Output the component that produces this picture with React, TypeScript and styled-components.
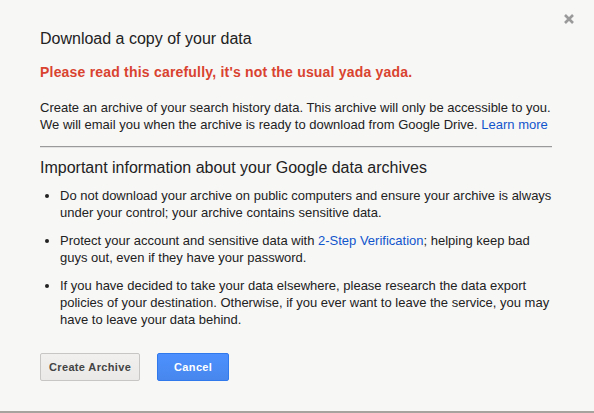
import styled, { createGlobalStyle } from "styled-components";

const GlobalStyle = createGlobalStyle`
  html, body {
    margin: 0;
    padding: 0;
    background: #f7f7f6;
  }
  body {
    font-family: "Liberation Sans", Arial, sans-serif;
    color: #222;
  }
`;

const Dialog = styled.div`
  position: relative;
  width: 594px;
  height: 413px;
  box-sizing: border-box;
  padding: 29px 42px 0 40px;
  background: #f7f7f6;
  border-bottom: 2px solid #a6a29e;
`;

const Close = styled.button`
  position: absolute;
  top: 13px;
  right: 19px;
  width: 12px;
  height: 12px;
  padding: 0;
  border: 0;
  background: none;
  cursor: pointer;
  display: flex;
`;

const Title = styled.h2`
  margin: 0;
  font-size: 16px;
  line-height: 20px;
  font-weight: normal;
  color: #222;
`;

const Warning = styled.p`
  margin: 15px 0 0;
  font-size: 14px;
  line-height: 17px;
  font-weight: bold;
  letter-spacing: 0.2px;
  color: #d9432f;
`;

const Text = styled.p`
  margin: 18px 0 0;
  font-size: 13px;
  line-height: 17px;
`;

const Link = styled.a`
  color: #15c;
  text-decoration: none;
`;

const Divider = styled.hr`
  margin: 13px 0 10px;
  border: 0;
  border-top: 1px solid #9a9a9a;
  border-bottom: 1px solid #e2e2e2;
  height: 0;
`;

const Heading = styled.h3`
  margin: 0;
  font-size: 16px;
  line-height: 20px;
  font-weight: normal;
  color: #222;
`;

const List = styled.ul`
  margin: 9px 0 0;
  padding-left: 20px;
`;

const Item = styled.li`
  font-size: 13px;
  line-height: 17px;
  margin-bottom: 11px;
  &:last-child {
    margin-bottom: 0;
  }
`;

const Actions = styled.div`
  display: flex;
  gap: 17px;
  margin-top: 25px;
`;

const Button = styled.button<{ primary?: boolean }>`
  min-width: 72px;
  height: 28px;
  padding: 0 8px;
  box-sizing: border-box;
  border-radius: 2px;
  font-family: "Liberation Sans", Arial, sans-serif;
  font-size: 11px;
  font-weight: bold;
  letter-spacing: 0.35px;
  cursor: pointer;
  border: 1px solid ${(p) => (p.primary ? "#3079ed" : "#c8c6c4")};
  background: ${(p) =>
    p.primary
      ? "linear-gradient(#4d90fe, #4787ed)"
      : "linear-gradient(#f1f0ef, #eae9e8)"};
  color: ${(p) => (p.primary ? "#fff" : "#444")};
`;

export default function App() {
  return (
    <>
      <GlobalStyle />
      <Dialog>
        <Close aria-label="Close">
          <svg width="12" height="12" viewBox="0 0 12 12">
            <path d="M2 2 L10 10 M10 2 L2 10" stroke="#9a9a9a" strokeWidth="2.6" />
          </svg>
        </Close>
        <Title>Download a copy of your data</Title>
        <Warning>Please read this carefully, it's not the usual yada yada.</Warning>
        <Text>
          Create an archive of your search history data. This archive will only be accessible to you.
          We will email you when the archive is ready to download from Google Drive.{" "}
          <Link href="#">Learn more</Link>
        </Text>
        <Divider />
        <Heading>Important information about your Google data archives</Heading>
        <List>
          <Item>
            Do not download your archive on public computers and ensure your archive is always
            under your control; your archive contains sensitive data.
          </Item>
          <Item>
            Protect your account and sensitive data with <Link href="#">2-Step Verification</Link>;
            helping keep bad guys out, even if they have your password.
          </Item>
          <Item>
            If you have decided to take your data elsewhere, please research the data export
            policies of your destination. Otherwise, if you ever want to leave the service, you may
            have to leave your data behind.
          </Item>
        </List>
        <Actions>
          <Button>Create Archive</Button>
          <Button primary>Cancel</Button>
        </Actions>
      </Dialog>
    </>
  );
}
